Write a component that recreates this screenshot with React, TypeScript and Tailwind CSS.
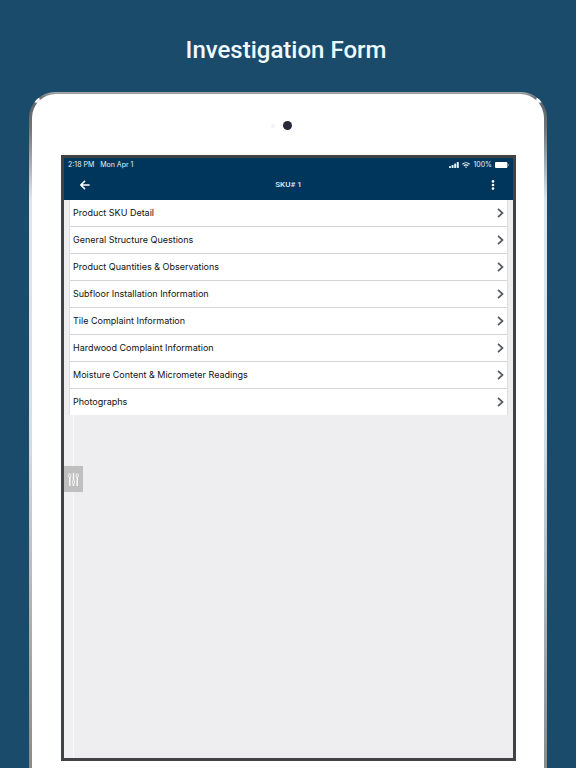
import React from 'react';

const sections = [
  'Product SKU Detail',
  'General Structure Questions',
  'Product Quantities & Observations',
  'Subfloor Installation Information',
  'Tile Complaint Information',
  'Hardwood Complaint Information',
  'Moisture Content & Micrometer Readings',
  'Photographs',
];

const StatusBar: React.FC = () => (
  <div className="flex h-[13px] items-center justify-between px-1 font-[Inter,sans-serif] text-[7px] leading-3 text-[#e6f2fa]">
    <div className="flex gap-[6px]">
      <span>2:18 PM</span>
      <span>Mon Apr 1</span>
    </div>
    <div className="flex items-center gap-[3px]">
      <svg width="10" height="6" viewBox="0 0 10 6" fill="currentColor" aria-hidden="true">
        <rect x="0" y="4" width="2" height="2" rx=".4" />
        <rect x="2.6" y="3" width="2" height="3" rx=".4" />
        <rect x="5.2" y="1.6" width="2" height="4.4" rx=".4" />
        <rect x="7.8" y="0" width="2" height="6" rx=".4" />
      </svg>
      <svg width="8" height="6" viewBox="0 0 8 6" fill="none" stroke="currentColor" strokeWidth="1.2" aria-hidden="true">
        <path d="M.4 2.2a5.2 5.2 0 0 1 7.2 0M1.8 3.8a3.2 3.2 0 0 1 4.4 0" />
        <path d="M4 6 2.9 4.9a1.6 1.6 0 0 1 2.2 0z" fill="currentColor" stroke="none" />
      </svg>
      <span>100%</span>
      <svg width="14" height="6" viewBox="0 0 14 6" fill="#ffffff" aria-hidden="true">
        <rect x="0" y="0" width="12.4" height="6" rx="1" />
        <rect x="13" y="2" width=".8" height="2" rx=".4" opacity=".7" />
      </svg>
    </div>
  </div>
);

const Header: React.FC = () => (
  <header className="grid h-[29px] grid-cols-3 items-center px-4 pb-[2px] text-white">
    <button type="button" aria-label="Back" className="justify-self-start">
      <svg width="10" height="10" viewBox="0 0 10 10" fill="none" stroke="currentColor" strokeWidth="1.5" aria-hidden="true">
        <path d="M9.6 5H1.2M5 .9.9 5 5 9.1" />
      </svg>
    </button>
    <h2 className="text-center text-[8px] font-medium text-[#dcebf5]">SKU# 1</h2>
    <button type="button" aria-label="More options" className="justify-self-end">
      <svg width="8" height="10" viewBox="0 0 8 10" fill="currentColor" aria-hidden="true">
        <circle cx="4" cy="1.4" r="1.3" />
        <circle cx="4" cy="5" r="1.3" />
        <circle cx="4" cy="8.6" r="1.3" />
      </svg>
    </button>
  </header>
);

const SectionRow: React.FC<{ label: string }> = ({ label }) => (
  <li className="border-b border-[#d3d5d8] last:border-b-0">
    <button type="button" className="flex h-[26px] w-full items-center justify-between px-[3px] text-left font-[Inter,sans-serif] text-[9px] text-[#111111]">
      <span>{label}</span>
      <svg width="7" height="10" viewBox="0 0 7 10" fill="none" stroke="#55585c" strokeWidth="1.7" aria-hidden="true">
        <path d="M1 .9 5.5 5 1 9.1" />
      </svg>
    </button>
  </li>
);

export default function App() {
  return (
    <div className="flex min-h-screen flex-col bg-[#1b4b6b] font-[Roboto,sans-serif]">
      <h1 className="pb-6 pt-8 pr-1 text-center text-[24px] font-medium leading-9 text-[#eefaff]">
        Investigation Form
      </h1>

      <div className="mx-[29px] flex flex-1 flex-col rounded-t-[26px] bg-[radial-gradient(circle_at_8px_8px,#ffffff_0,#ffffff_2px,transparent_4px),radial-gradient(circle_at_calc(100%-8px)_8px,#ffffff_0,#ffffff_2px,transparent_4px),linear-gradient(180deg,#a9acae_0%,#5f6468_1%,#6e7275_5%,#dfe7ec_16%,#d5dfe6_50%,#8a8b89_100%)] px-[3px] pt-[2px]">
        <div className="flex flex-1 flex-col rounded-t-[24px] bg-white pb-[7px] pl-[29px] pr-[28px]">
          <div className="flex h-[61px] items-center justify-center gap-2 pr-[14px] pt-[2px]">
            <span className="size-1 rounded-full bg-[#f1f1f3]" />
            <span className="size-[9px] rounded-full bg-[#28283a]" />
          </div>

          <div className="relative flex flex-1 flex-col border-[3px] border-[#414246] bg-[#eeeef0]">
            <div className="bg-[#00365c]">
              <StatusBar />
              <Header />
            </div>
            <ul className="mx-[5px] border-x border-[#dddfe2] bg-white">
              {sections.map((label) => (
                <SectionRow key={label} label={label} />
              ))}
            </ul>
            <div className="flex flex-1">
              <div className="w-[10px] border-r border-[#f8f8f9] bg-[#f0f0f2]" />
            </div>
            <button
              type="button"
              aria-label="Adjust settings"
              className="absolute left-0 top-[308px] flex h-[26px] w-[19px] items-center justify-center bg-[#bfbfc0]"
            >
              <svg width="11" height="13" viewBox="0 0 11 13" fill="none" stroke="#f8f8f8" aria-hidden="true">
                <path d="M1.8 4v9M5.5 0v7.5M5.5 11v2M9.2 4v9" strokeWidth="1.5" />
                <ellipse cx="1.8" cy="2.6" rx="1.2" ry="1.8" />
                <ellipse cx="5.5" cy="9.2" rx="1.2" ry="1.8" />
                <ellipse cx="9.2" cy="2.6" rx="1.2" ry="1.8" />
              </svg>
            </button>
          </div>
        </div>
      </div>
    </div>
  );
}
